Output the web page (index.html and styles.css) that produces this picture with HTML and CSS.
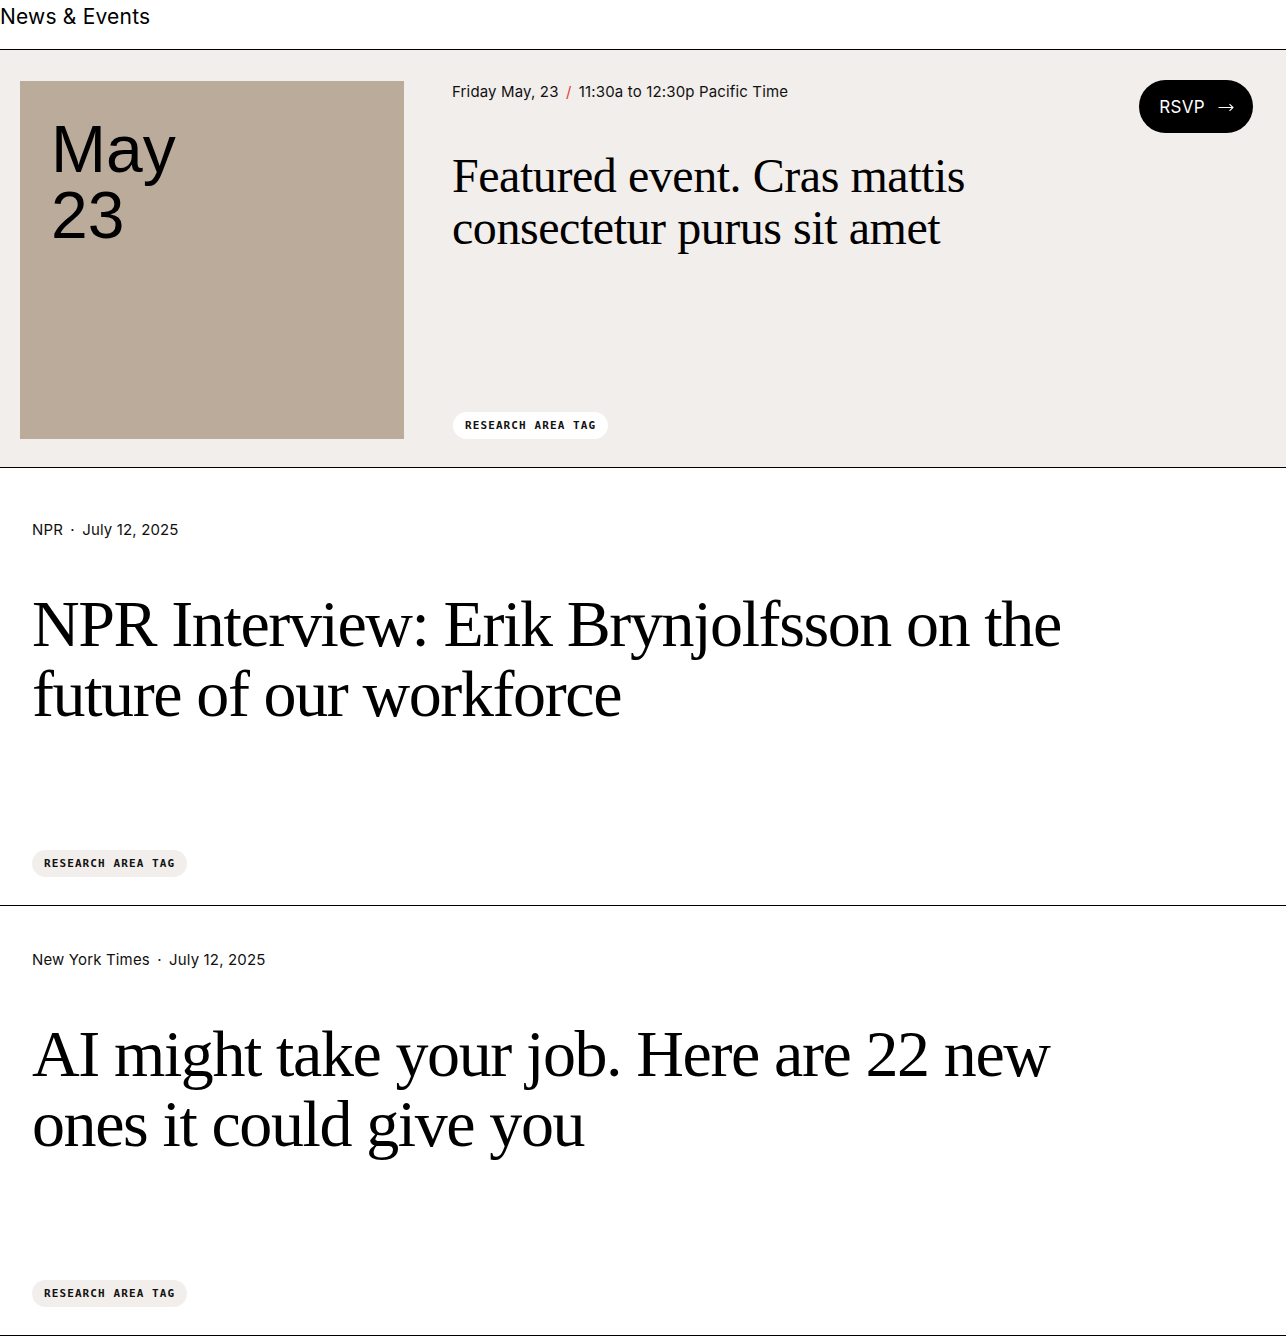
FILE: index.html
```html
<!DOCTYPE html>
<html>
<head>
<meta charset="utf-8">
<link rel="stylesheet" href="styles.css">
</head>
<body>
<h1 class="page-title">News &amp; Events</h1>
<section class="featured">
  <div class="date-box">
    <div class="date-line">May</div>
    <div class="date-line">23</div>
  </div>
  <div class="featured-body">
    <div class="featured-top">
      <div class="featured-main">
        <p class="meta">Friday May, 23 <span class="slash">/</span> 11:30a to 12:30p Pacific Time</p>
        <h2 class="featured-title">Featured event. Cras mattis consectetur purus sit amet</h2>
      </div>
      <a class="rsvp" href="#">RSVP <svg class="arrow" width="16" height="9" viewBox="0 0 16 9"><path d="M0.5 4.5H15M11.5 1.2L15 4.5L11.5 7.8" fill="none" stroke="#fff" stroke-width="1.1"/></svg></a>
    </div>
    <span class="tag tag-white">RESEARCH AREA TAG</span>
  </div>
</section>
<article class="news news-first">
  <p class="meta">NPR <span class="dot">·</span> July 12, 2025</p>
  <h2 class="news-title">NPR Interview: Erik Brynjolfsson on the future of our workforce</h2>
  <span class="tag">RESEARCH AREA TAG</span>
</article>
<article class="news">
  <p class="meta">New York Times <span class="dot">·</span> July 12, 2025</p>
  <h2 class="news-title">AI might take your job. Here are 22 new ones it could give you</h2>
  <span class="tag">RESEARCH AREA TAG</span>
</article>
</body>
</html>
```
FILE: styles.css
```css
* { box-sizing: border-box; }
body {
  margin: 0;
  font-family: Inter, "Liberation Sans", sans-serif;
  color: #000;
  background: #fff;
}
.page-title {
  margin: 0;
  font-size: 21px;
  font-weight: 400;
  line-height: 33px;
  height: 50px;
  border-bottom: 1px solid #000;
  letter-spacing: 0.2px;
}
.featured {
  display: flex;
  background: #f2eeeb;
  padding: 31px 33px 28px 20px;
  border-bottom: 1px solid #000;
  gap: 48px;
}
.date-box {
  width: 384px;
  height: 358px;
  flex: none;
  background: #bbab9b;
  padding: 35px 31px;
}
.date-line {
  font-family: "Liberation Sans", Arial, sans-serif;
  font-size: 66px;
  line-height: 66px;
  height: 66px;
}
.featured-body {
  flex: 1;
  display: flex;
  flex-direction: column;
  justify-content: space-between;
  align-items: flex-start;
}
.featured-top {
  display: flex;
  justify-content: space-between;
  align-items: flex-start;
  width: 100%;
}
.meta {
  margin: 0;
  font-size: 15px;
  line-height: 20px;
  color: #111;
  letter-spacing: 0.15px;
}
.featured-main .meta { margin-top: 1px; }
.slash { color: #e0412f; margin: 0 3px; }
.dot { margin: 0 3px; }
.featured-title {
  margin: 48px 0 0;
  font-family: "Liberation Serif", serif;
  font-weight: 400;
  font-size: 48px;
  line-height: 52px;
  letter-spacing: -0.45px;
  max-width: 560px;
}
.rsvp {
  display: flex;
  align-items: center;
  height: 53px;
  margin-top: -1px;
  padding: 0 19px 0 20px;
  border-radius: 27px;
  background: #000;
  color: #fff;
  text-decoration: none;
  font-size: 17px;
  letter-spacing: 0.3px;
  gap: 13px;
}
.arrow { display: block; margin-top: 1px; }
.tag {
  display: inline-block;
  height: 27px;
  line-height: 27px;
  padding: 0 12px;
  border-radius: 14px;
  background: #f2eeeb;
  font-family: "DejaVu Sans Mono", monospace;
  font-weight: 700;
  font-size: 11px;
  letter-spacing: 1.1px;
  color: #111;
}
.tag-white { background: #fff; margin-left: 1px; }
.news {
  display: flex;
  flex-direction: column;
  align-items: flex-start;
  height: 430px;
  padding: 44px 32px 28px;
  border-bottom: 1px solid #000;
}
.news-first {
  height: 438px;
  padding-top: 52px;
}
.news-title {
  margin: 49px 0 0;
  font-family: "Liberation Serif", serif;
  font-weight: 400;
  font-size: 66px;
  line-height: 70px;
  letter-spacing: -1.4px;
  max-width: 1060px;
  flex: 1;
}
```
